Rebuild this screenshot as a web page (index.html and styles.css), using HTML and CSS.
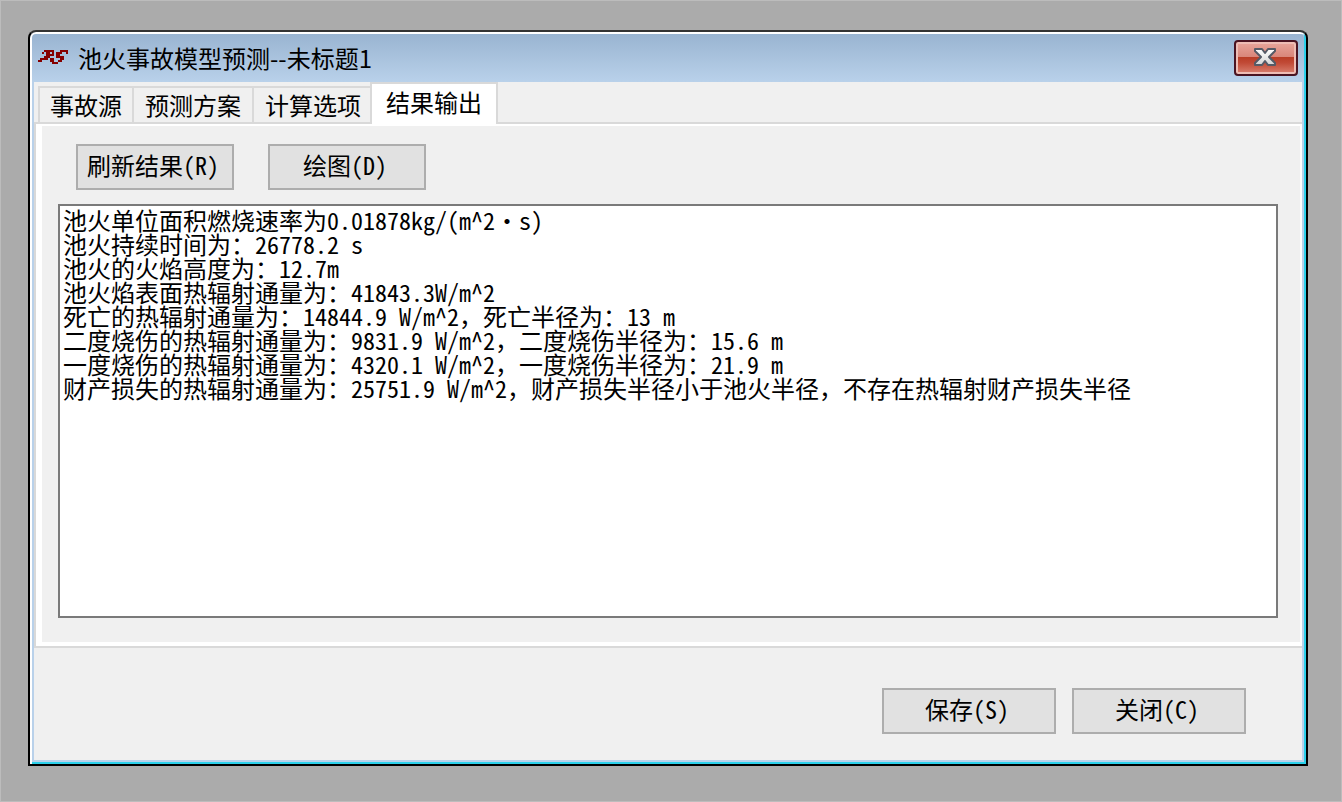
FILE: index.html
```html
<!DOCTYPE html>
<html lang="zh-CN">
<head>
<meta charset="utf-8">
<meta name="viewport" content="width=device-width, initial-scale=1">
<title>池火事故模型预测--未标题1</title>
<link rel="stylesheet" href="styles.css">
</head>
<body>
<main class="window">
  <header class="titlebar">
    <svg class="app-icon" viewBox="0 0 15 8" shape-rendering="crispEdges" aria-hidden="true">
      <path fill="#850000" d="M3 0h5v1h-5zM11 0h4v1h-4zM2 1h1v1h-1zM4 1h2v1h-2zM7 1h1v1h-1zM9 1h3v1h-3zM14 1h1v1h-1zM4 2h4v1h-4zM9 2h2v1h-2zM3 3h3v1h-3zM9 3h4v1h-4zM1 4h4v1h-4zM6 4h2v1h-2zM11 4h2v1h-2zM0 5h2v1h-2zM6 5h2v1h-2zM10 5h2v1h-2zM7 6h3v1h-3z"/>
    </svg>
    <h1 class="title">池火事故模型预测--未标题1</h1>
    <button class="close" type="button" aria-label="关闭窗口">
      <svg class="close-icon" viewBox="0 0 24 20" aria-hidden="true">
        <defs>
          <linearGradient id="x-fill" x1="0" y1="0" x2="0" y2="1">
            <stop offset="0" stop-color="#fff"/>
            <stop offset="1" stop-color="#d4d4d4"/>
          </linearGradient>
        </defs>
        <path fill="url(#x-fill)" stroke="#555a66" stroke-width="2" stroke-linejoin="round" d="M2 2h7l3 4 3-4h7v2l-6 6 6 6v2h-7l-3-4-3 4H2v-2l6-6-6-6z"/>
      </svg>
    </button>
  </header>
  <div class="client">
    <div class="tabs" role="tablist">
      <button class="tab tab-source" type="button" role="tab" aria-selected="false">事故源</button>
      <button class="tab" type="button" role="tab" aria-selected="false">预测方案</button>
      <button class="tab" type="button" role="tab" aria-selected="false">计算选项</button>
      <button class="tab tab-active" type="button" role="tab" aria-selected="true" aria-controls="result-panel">结果输出</button>
    </div>
    <section class="panel" id="result-panel" role="tabpanel">
      <div class="toolbar">
        <button class="btn" type="button">刷新结果(R)</button>
        <button class="btn" type="button">绘图(D)</button>
      </div>
      <textarea class="output" aria-label="结果输出" spellcheck="false" readonly>池火单位面积燃烧速率为0.01878kg/(m^2·s)
池火持续时间为：26778.2 s
池火的火焰高度为：12.7m
池火焰表面热辐射通量为：41843.3W/m^2
死亡的热辐射通量为：14844.9 W/m^2，死亡半径为：13 m
二度烧伤的热辐射通量为：9831.9 W/m^2，二度烧伤半径为：15.6 m
一度烧伤的热辐射通量为：4320.1 W/m^2，一度烧伤半径为：21.9 m
财产损失的热辐射通量为：25751.9 W/m^2，财产损失半径小于池火半径，不存在热辐射财产损失半径</textarea>
    </section>
    <footer class="actions">
      <button class="btn btn-wide" type="button">保存(S)</button>
      <button class="btn btn-wide" type="button">关闭(C)</button>
    </footer>
  </div>
</main>
</body>
</html>
```
FILE: styles.css
```css
*, *::before, *::after { box-sizing: border-box; }

body {
  margin: 0;
  min-height: 100vh;
  display: flex;
  padding: 29px 33px 35px 27px;
  border: 1px solid #bcbcbc;
  background: #ababab;
  color: #000;
  font: 24px/24px "Noto Sans Mono CJK SC", "Noto Sans CJK SC", sans-serif;
}

button, textarea { font: inherit; color: inherit; }

.window {
  flex: 1;
  min-width: 0;
  display: flex;
  flex-direction: column;
  border: 2px solid #000;
  border-top-color: #333;
  border-radius: 8px 8px 0 0;
  background: #b9d1ea;
  box-shadow: inset 2px 2px #fff, inset -2px -2px #2bd0ea;
  padding: 2px 2px 4px;
}

.titlebar {
  display: flex;
  align-items: center;
  gap: 10px;
  height: 48px;
  padding: 0 6px;
  border-radius: 4px 4px 0 0;
  background: linear-gradient(#99b4d1, #b9d1ea);
}

.app-icon { width: 30px; height: 16px; flex: none; }

.title {
  flex: 1;
  margin: 0;
  font: 400 24px/24px "Noto Sans CJK SC", sans-serif;
  white-space: nowrap;
}

.close {
  width: 64px;
  height: 36px;
  display: grid;
  place-items: center;
  padding: 0 2px 2px 0;
  border: 2px solid #4a1422;
  border-radius: 4px;
  background: linear-gradient(#e8a69c, #d9867a 46%, #b83c25 46%, #c14a36 65%, #d98272);
  box-shadow: inset 0 0 0 2px #eebdb5;
}

.close-icon { width: 24px; height: 20px; }

.client {
  flex: 1;
  display: flex;
  flex-direction: column;
  margin: 0 2px;
  background: #f0f0f0;
}

.tabs {
  display: flex;
  align-items: flex-end;
  padding-left: 4px;
  border-bottom: 2px solid #d9d9d9;
}

.tab {
  height: 36px;
  width: 120px;
  padding: 0;
  border: solid #d9d9d9;
  border-width: 2px 0 0 2px;
  background: #f0f0f0;
  white-space: nowrap;
}

.tab-source { width: 94px; }

.tab-active {
  width: 128px;
  height: 42px;
  margin-left: -2px;
  margin-bottom: -2px;
  padding-bottom: 4px;
  border-width: 2px 2px 0;
  background: #fff;
}

.panel {
  flex: 1;
  display: flex;
  flex-direction: column;
  gap: 14px;
  padding: 18px 22px 24px 16px;
  border: solid #fff;
  border-width: 2px 2px 4px 6px;
  box-shadow: -2px 0 #d9d9d9, -2px 2px #d9d9d9, 0 2px #d9d9d9;
  margin-left: 2px;
}

.toolbar { display: flex; gap: 34px; padding-left: 18px; }

.btn {
  width: 158px;
  height: 46px;
  padding: 0 4px 4px 0;
  border: 2px solid #adadad;
  background: #e1e1e1;
  white-space: nowrap;
}

.btn-wide { width: 174px; }

.output {
  flex: 1;
  width: 100%;
  min-height: 200px;
  padding: 2px 3px;
  border: 2px solid #7a7a7a;
  border-radius: 0;
  background: #fff;
  resize: none;
  outline: 0;
}

.actions {
  display: flex;
  justify-content: flex-end;
  gap: 16px;
  padding: 42px 56px 26px;
}
```
